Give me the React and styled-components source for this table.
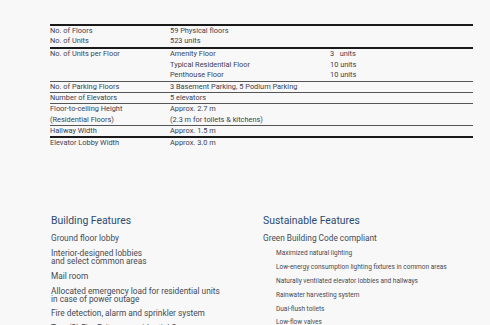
import React from 'react';
import styled, { createGlobalStyle } from 'styled-components';

const GlobalStyle = createGlobalStyle`
  html, body {
    margin: 0;
    padding: 0;
    background: #f8f8f8;
  }
  body {
    font-family: Roboto, "Noto Sans", Arial, sans-serif;
    color: #3c4250;
  }
`;

const Page = styled.div`
  width: 490px;
  height: 325px;
  overflow: hidden;
  padding: 24px 17px 0 50px;
  box-sizing: border-box;
`;

const Specs = styled.div`
  width: 423px;
  border-top: 2px solid #1a1a1a;
  font-size: 7.4px;
  color: #3c4250;
`;

const Group = styled.div`
  display: grid;
  grid-template-columns: 120px 160px 1fr;
  padding-bottom: ${(p) => p.$pad || 0}px;
  border-bottom: ${(p) => (p.$strong ? '2px solid #1a1a1a' : p.$none ? 'none' : '1px solid #555')};
`;

const Cell = styled.div`
  line-height: 10.2px;
  white-space: pre;
  grid-column: ${(p) => p.$col || 'auto'};
`;

const Features = styled.div`
  display: grid;
  grid-template-columns: 212px 1fr;
  margin-top: 66px;
`;

const Column = styled.section`
  display: flex;
  flex-direction: column;
`;

const Heading = styled.h2`
  margin: 0 0 7px;
  font-weight: 400;
  font-size: 10.4px;
  line-height: 13px;
  color: #2b4a70;
  padding-left: 1px;
`;

const Item = styled.p`
  margin: 0 0 6.5px;
  font-size: 8.3px;
  line-height: 8.2px;
  color: #444a55;
  white-space: ${(p) => (p.$wrap ? 'pre-line' : 'normal')};
  padding-left: 1px;
`;

const SubList = styled.ul`
  list-style: none;
  margin: 0;
  padding: 1.5px 0 0 14px;
`;

const SubItem = styled.li`
  font-size: 6.5px;
  line-height: 7px;
  margin-bottom: 6.8px;
  color: #444a55;
`;

const building = [
  'Ground floor lobby',
  'Interior-designed lobbies\nand select common areas',
  'Mail room',
  'Allocated emergency load for residential units\nin case of power outage',
  'Fire detection, alarm and sprinkler system',
  'Two (2) Fire Exits per residential floor',
];

const sustainable = [
  'Maximized natural lighting',
  'Low-energy consumption lighting fixtures in common areas',
  'Naturally ventilated elevator lobbies and hallways',
  'Rainwater harvesting system',
  'Dual-flush toilets',
  'Low-flow valves',
];

function App() {
  return (
    <Page>
      <GlobalStyle />
      <Specs>
        <Group $strong $pad={1}>
          <Cell>No. of Floors</Cell>
          <Cell $col="2 / 4">59 Physical floors</Cell>
          <Cell>No. of Units</Cell>
          <Cell $col="2 / 4">523 units</Cell>
        </Group>
        <Group $pad={1}>
          <Cell>No. of Units per Floor</Cell>
          <Cell>Amenity Floor</Cell>
          <Cell>{'3   units'}</Cell>
          <Cell $col="2">Typical Residential Floor</Cell>
          <Cell>10 units</Cell>
          <Cell $col="2">Penthouse Floor</Cell>
          <Cell>10 units</Cell>
        </Group>
        <Group>
          <Cell>No. of Parking Floors</Cell>
          <Cell $col="2 / 4">3 Basement Parking, 5 Podium Parking</Cell>
        </Group>
        <Group>
          <Cell>Number of Elevators</Cell>
          <Cell $col="2 / 4">5 elevators</Cell>
        </Group>
        <Group>
          <Cell>Floor-to-ceiling Height</Cell>
          <Cell $col="2 / 4">Approx. 2.7 m</Cell>
          <Cell>(Residential Floors)</Cell>
          <Cell $col="2 / 4">(2.3 m for toilets &amp; kitchens)</Cell>
        </Group>
        <Group $strong>
          <Cell>Hallway Width</Cell>
          <Cell $col="2 / 4">Approx. 1.5 m</Cell>
        </Group>
        <Group $none>
          <Cell>Elevator Lobby Width</Cell>
          <Cell $col="2 / 4">Approx. 3.0 m</Cell>
        </Group>
      </Specs>
      <Features>
        <Column>
          <Heading>Building Features</Heading>
          {building.map((t) => (
            <Item key={t} $wrap>{t}</Item>
          ))}
        </Column>
        <Column>
          <Heading>Sustainable Features</Heading>
          <Item>Green Building Code compliant</Item>
          <SubList>
            {sustainable.map((t) => (
              <SubItem key={t}>{t}</SubItem>
            ))}
          </SubList>
        </Column>
      </Features>
    </Page>
  );
}

export default App;
